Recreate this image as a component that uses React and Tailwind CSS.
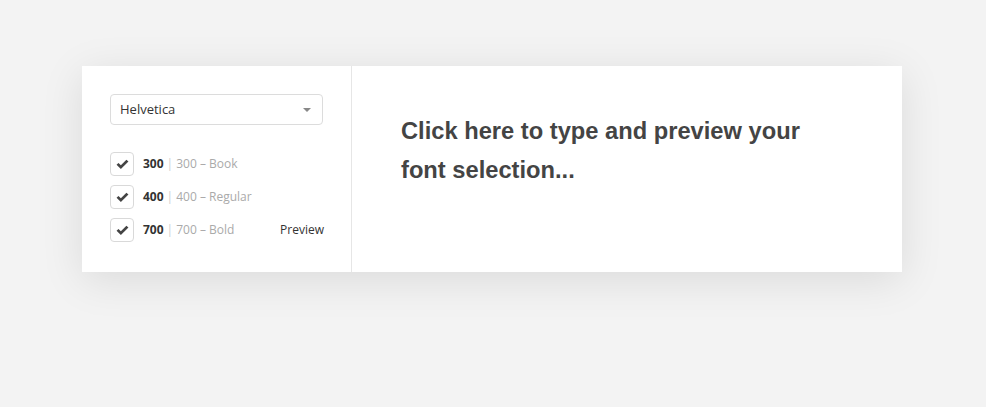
const weights = [
  { value: "300", label: "300 – Book" },
  { value: "400", label: "400 – Regular" },
  { value: "700", label: "700 – Bold" },
]

export default function App() {
  return (
    <div className="min-h-[407px] w-full bg-[#f3f3f3] pt-[66px] pl-[82px]">
      <div className="flex h-[206px] w-[820px] bg-white shadow-[0_8px_40px_rgba(0,0,0,0.10)]">
        <div className="w-[270px] shrink-0 border-r border-[#e6e6e6] pl-[28px] pr-[28px] pt-[28px] font-['Open_Sans',sans-serif]">
          <div className="flex h-[31px] w-[213px] items-center justify-between rounded-[4px] border border-[#dcdcdc] pl-[9px] pr-[11px] text-[13px] text-[#333]">
            <span>Helvetica</span>
            <span className="h-0 w-0 border-x-[4px] border-t-[4px] border-x-transparent border-t-[#888]" />
          </div>
          <div className="mt-[27px] flex flex-col gap-[9px]">
            {weights.map((w, i) => (
              <div key={w.value} className="flex h-[24px] items-center text-[12px]">
                <div className="flex h-[24px] w-[24px] items-center justify-center rounded-[4px] border border-[#d9d9d9]">
                  <svg width="13" height="11" viewBox="0 0 12 10">
                    <path d="M0.5 5.3 L2.3 3.5 L4.5 5.6 L9.6 0.5 L11.5 2.3 L4.5 9.2 Z" fill="#444" />
                  </svg>
                </div>
                <span className="ml-[9px] font-bold text-[#333]">{w.value}</span>
                <span className="mx-[3px] text-[#cfcfcf]">|</span>
                <span className="text-[#aaa]">{w.label}</span>
                {i === 2 && <span className="ml-auto mr-[-1px] text-[#333]">Preview</span>}
              </div>
            ))}
          </div>
        </div>
        <div className="flex-1 pl-[49px] pt-[46px]">
          <p className="w-[425px] font-['Liberation_Sans',Arial,sans-serif] text-[23.7px] font-bold leading-[39px] text-[#444]">
            Click here to type and preview your font selection...
          </p>
        </div>
      </div>
    </div>
  )
}
